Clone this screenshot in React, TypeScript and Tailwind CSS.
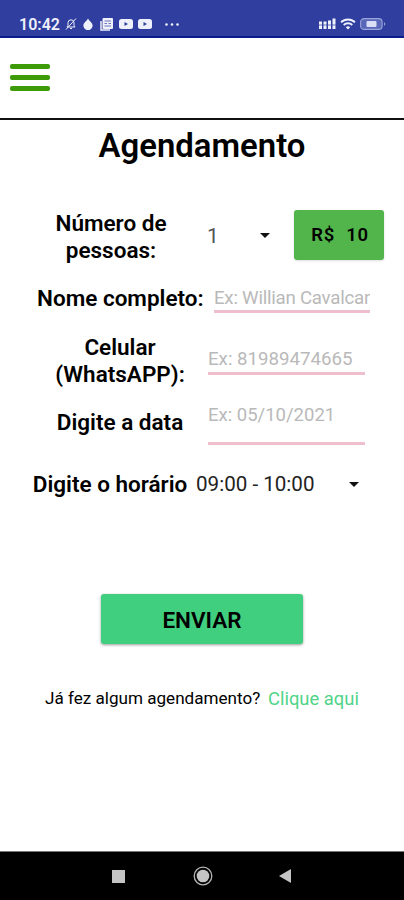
import type { ReactNode } from "react";

function StatusBar() {
  return (
    <header className="flex h-[38px] shrink-0 items-start justify-between border-b-2 border-[#0b1c8c] bg-[#303f9f] pt-[14px] pr-[18px] pl-[19px] text-[#eef0fb]">
      <div className="flex h-5 items-center">
        <span className="w-[46px] pt-px text-[16px] leading-5 font-semibold whitespace-nowrap">10:42</span>
        {/* muted bell */}
        <svg className="h-3 w-3" viewBox="0 0 12 12" fill="none" stroke="currentColor" strokeWidth="1">
          <path d="M2 9h8L9 7.5V4.8a3 3 0 0 0-6 0v2.7zM5 10.5h2M1 11.5 11 .5" />
        </svg>
        <svg className="ml-[6px] h-[12px] w-[10px]" viewBox="0 0 10 13" fill="currentColor">
          <path d="M5 .5C4 3 0 5 0 8.200a4.600 4.600 0 0 0 10 0C10 5 6 3 5 .5z" />
        </svg>
        <svg className="ml-[7px] h-[13px] w-[13px]" viewBox="0 0 13 13">
          <path d="M1 3v9h9" fill="none" stroke="currentColor" strokeWidth="1.500" />
          <rect x="2.500" y="0" width="10.500" height="11" rx="1" fill="currentColor" />
          <path d="M4.500 3h6.500M4.500 5.500h2.500M8.500 5.500h2.500M4.500 8h6.500" stroke="#303f9f" strokeWidth=".7" />
        </svg>
        <VideoIcon className="ml-[6px]" />
        <VideoIcon className="ml-[5px]" />
        <svg className="ml-[13px] h-[3px] w-[14px]" viewBox="0 0 14 3" fill="currentColor">
          <circle cx="1.500" cy="1.500" r="1.300" />
          <circle cx="7" cy="1.500" r="1.300" />
          <circle cx="12.500" cy="1.500" r="1.300" />
        </svg>
      </div>
      <div className="flex h-5 items-center">
        <svg className="h-[12px] w-[17px]" viewBox="0 0 17 12" fill="currentColor">
          <path d="M0 3.500h3V11H0zM4.500 3.500h3V11h-3zM9 2.500h3V11H9zM13.500.5h3V11h-3z" />
          <path d="M0 7h17" stroke="#303f9f" strokeWidth=".7" />
        </svg>
        <svg className="ml-[4px] h-[12px] w-[16px]" viewBox="0 0 16 12" fill="none" stroke="currentColor" strokeWidth="1.900">
          <path d="M1 4.300a10 10 0 0 1 14 0M3.700 7a6.200 6.200 0 0 1 8.600 0" />
          <path d="M5.800 9.200a3.200 3.200 0 0 1 4.400 0L8 11.500z" fill="currentColor" stroke="none" />
        </svg>
        <svg className="ml-[4px] h-[12px] w-[26px]" viewBox="0 0 26 12">
          <rect x=".6" y=".6" width="21.500" height="10.800" rx="3.500" fill="#5967b8" stroke="#9aa4dc" strokeWidth="1.100" />
          <rect x="6.500" y="3" width="10" height="6" rx="1" fill="#d9ddf5" />
          <path d="M24 4v4l1.500-2z" fill="#9aa4dc" />
        </svg>
      </div>
    </header>
  );
}

function VideoIcon({ className }: { className: string }) {
  return (
    <svg className={`h-[10px] w-[14px] ${className}`} viewBox="0 0 14 10">
      <rect width="14" height="10" rx="2.500" fill="currentColor" />
      <path d="M5.500 3v4L9 5z" fill="#303f9f" />
    </svg>
  );
}

function Label({ className, children }: { className: string; children: ReactNode }) {
  return <span className={`shrink-0 text-center text-[22.500px] leading-[26.500px] font-semibold whitespace-nowrap ${className}`}>{children}</span>;
}

function Caret({ className }: { className: string }) {
  return (
    <svg className={`h-[5px] w-[10px] shrink-0 ${className}`} viewBox="0 0 10 5">
      <path d="M0 0h10L5 5z" fill="#111" />
    </svg>
  );
}

export default function App() {
  return (
    <div className="flex h-[900px] w-[404px] flex-col overflow-hidden bg-white font-['Roboto',sans-serif] text-black">
      <StatusBar />

      <nav className="flex h-[82px] shrink-0 flex-col gap-[5.500px] border-b-2 border-[#111] pt-[25.500px] pl-[10px]">
        <i className="h-[5.500px] w-[40px] rounded-[2px] bg-[#3d9a09]" />
        <i className="h-[5.500px] w-[40px] rounded-[2px] bg-[#3d9a09]" />
        <i className="h-[5.500px] w-[40px] rounded-[2px] bg-[#3d9a09]" />
      </nav>

      <main className="flex grow flex-col">
        <h1 className="mt-[6px] h-[40px] text-center text-[32.900px] leading-[40px] font-semibold">Agendamento</h1>

        <div className="mt-[44px] flex h-[50px]">
          <Label className="ml-[31px] w-[160px]">
            Número de
            <br />
            pessoas:
          </Label>
          <span className="mt-[14px] ml-[16px] w-[53px] text-[21px] leading-6 text-[#555]">1</span>
          <Caret className="mt-[23px]" />
          <button className="ml-[24px] h-[50px] w-[90px] rounded-[3px] bg-[#52b54b] pt-[2px] pl-[2px] text-[18.500px] font-semibold tracking-[0.700px] [word-spacing:6px] whitespace-nowrap shadow-sm">R$ 10</button>
        </div>

        <div className="mt-[22px] flex h-[32px]">
          <Label className="mt-[3px] ml-[37px] w-[166px]">Nome completo:</Label>
          <input className="ml-[11px] h-[31px] w-[156px] border-b-[3px] border-[#f0bfce] pt-[3px] text-[18.700px] tracking-[-0.250px] placeholder:text-[#b9b9b9]" placeholder="Ex: Willian Cavalcanti" />
        </div>

        <div className="mt-[20px] flex h-[54px]">
          <Label className="ml-[40px] w-[160px]">
            Celular
            <br />
            (WhatsAPP):
          </Label>
          <input className="mt-[9px] ml-[8px] h-[32px] w-[157px] border-b-[3px] border-[#f0bfce] pt-[3px] text-[18.700px] placeholder:text-[#b9b9b9]" placeholder="Ex: 81989474665" />
        </div>

        <div className="mt-[12px] flex h-[45px]">
          <Label className="mt-[9px] ml-[40px] w-[160px]">Digite a data</Label>
          <input className="ml-[8px] h-[45px] w-[157px] border-b-[3px] border-[#f0bfce] pb-[13px] text-[18.500px] placeholder:text-[#b9b9b9]" placeholder="Ex: 05/10/2021" />
        </div>

        <div className="mt-[25px] flex h-[28px] items-center">
          <Label className="ml-[32px] w-[156px]">Digite o horário</Label>
          <span className="ml-[8px] w-[153px] text-[20.600px] leading-7 whitespace-nowrap text-[#222]">09:00 - 10:00</span>
          <Caret className="" />
        </div>

        <button className="mt-[96px] ml-[101px] h-[50px] w-[202px] rounded-[3px] bg-[#40cf7e] pt-[3px] text-[22.500px] font-semibold shadow-[0_1px_3px_rgba(0,0,0,0.4)]">ENVIAR</button>

        <p className="mt-[39px] ml-[45px] flex items-center whitespace-nowrap">
          <span className="w-[223px] text-[17.100px] leading-7">Já fez algum agendamento?</span>
          <a className="mt-[2px] text-[18.400px] leading-7 text-[#4fd487]">Clique aqui</a>
        </p>
      </main>

      <footer className="flex h-[49px] shrink-0 items-center border-t border-[#777] bg-black">
        <i className="ml-[112px] h-[13px] w-[13px] bg-[#c4c4c4]" />
        <svg className="ml-[68px] h-[20px] w-[20px]" viewBox="0 0 20 20">
          <circle cx="10" cy="10" r="8.800" fill="none" stroke="#b5b5b5" strokeWidth="1.300" />
          <circle cx="10" cy="10" r="6.300" fill="#c4c4c4" />
        </svg>
        <svg className="ml-[66px] h-[14px] w-[12px]" viewBox="0 0 12 14">
          <path d="M12 0v14L0 7z" fill="#c4c4c4" />
        </svg>
      </footer>
    </div>
  );
}
